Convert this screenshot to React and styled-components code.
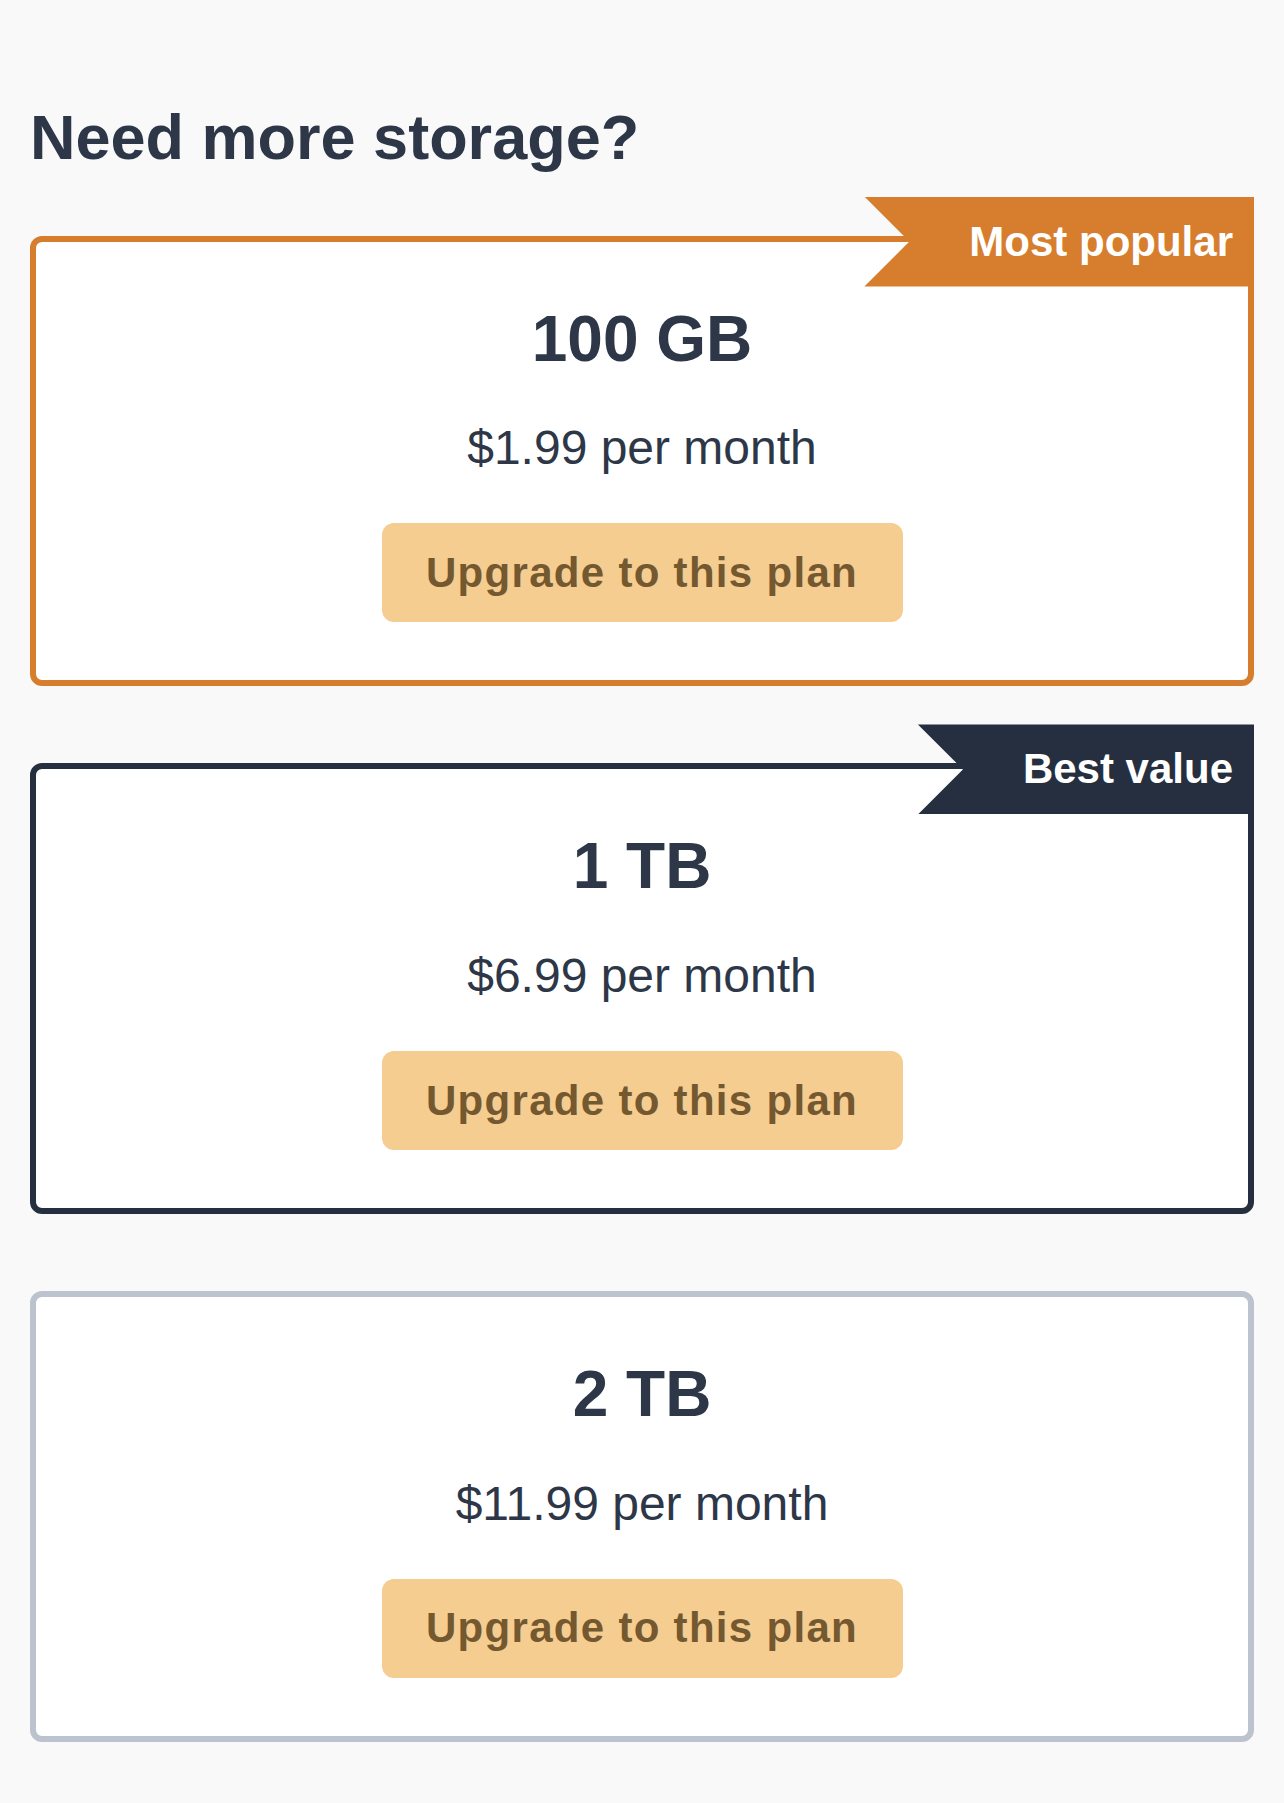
import React from "react";
import styled, { createGlobalStyle } from "styled-components";

const GlobalStyle = createGlobalStyle`
  html, body {
    margin: 0;
    padding: 0;
    background: #f9f9f9;
  }
  body {
    font-family: "Liberation Sans", Arial, Helvetica, sans-serif;
    color: #2d3748;
  }
  * { box-sizing: border-box; }
`;

const Page = styled.main`
  padding: 0 30px 63px 30px;
  display: flex;
  flex-direction: column;
`;

const Heading = styled.h1`
  margin: 100px 0 60px 0;
  font-size: 63px;
  line-height: 1.2;
  font-weight: 700;
  color: #2d3748;
`;

const PlanList = styled.div`
  display: flex;
  flex-direction: column;
  gap: 77px;
`;

const borderColors = {
  popular: "#d77e2e",
  value: "#252f3f",
  plain: "#bcc3cf",
};

const Card = styled.section`
  position: relative;
  background: #ffffff;
  border: 6px solid ${(p) => borderColors[p.$variant]};
  border-radius: 12px;
  padding: 59px 30px 58px;
  display: flex;
  flex-direction: column;
  align-items: center;
`;

const Ribbon = styled.div`
  position: absolute;
  top: -45px;
  right: -6px;
  height: 90px;
  display: flex;
  align-items: center;
  padding: 0 21px 0 105px;
  background: ${(p) => borderColors[p.$variant]};
  color: #ffffff;
  font-size: 42px;
  font-weight: 700;
  white-space: nowrap;
  clip-path: polygon(0 0, 100% 0, 100% 100%, 0 100%, 45px 50%);
`;

const Size = styled.h2`
  margin: 0;
  font-size: 64px;
  line-height: 1.2;
  font-weight: 700;
  color: #2d3748;
`;

const Price = styled.p`
  margin: 35px 0 0;
  font-size: 48px;
  line-height: 1.5;
  color: #2d3748;
`;

const UpgradeButton = styled.button`
  margin-top: 39px;
  width: 521px;
  height: 99px;
  border: none;
  border-radius: 12px;
  background: #f5cd91;
  color: #745830;
  font-family: "Liberation Sans", Arial, Helvetica, sans-serif;
  font-size: 42px;
  font-weight: 700;
  letter-spacing: 1.3px;
  display: flex;
  align-items: center;
  justify-content: center;
  cursor: pointer;
`;

const plans = [
  { size: "100 GB", price: "$1.99 per month", variant: "popular", badge: "Most popular" },
  { size: "1 TB", price: "$6.99 per month", variant: "value", badge: "Best value" },
  { size: "2 TB", price: "$11.99 per month", variant: "plain" },
];

export default function App() {
  return (
    <>
      <GlobalStyle />
      <Page>
        <Heading>Need more storage?</Heading>
        <PlanList>
          {plans.map((plan) => (
            <Card key={plan.size} $variant={plan.variant}>
              {plan.badge && <Ribbon $variant={plan.variant}>{plan.badge}</Ribbon>}
              <Size>{plan.size}</Size>
              <Price>{plan.price}</Price>
              <UpgradeButton>Upgrade to this plan</UpgradeButton>
            </Card>
          ))}
        </PlanList>
      </Page>
    </>
  );
}
